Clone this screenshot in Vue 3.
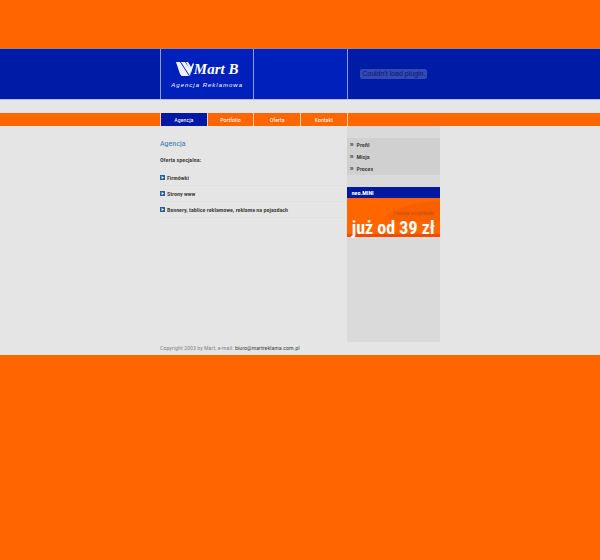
<script setup>
import { ref } from "vue";

const tabs = ["Agencja", "Portfolio", "Oferta", "Kontakt"];
const activeTab = ref("Agencja");

const offers = [
  "Firmówki",
  "Strony www",
  "Bannery, tablice reklamowe, reklama na pojazdach",
];

const sideLinks = ["Profil", "Misja", "Proces"];
</script>

<template>
  <div class="page">
    <header class="header">
      <div class="wrap header-grid">
        <div class="brand">
          <div class="brand-row">
            <svg class="mark" viewBox="0 0 18 16" aria-hidden="true">
              <path d="M0 1H4L13 15H6Q5 15 4 13Z" />
              <path d="M5 1H9L15 10L14 15Z" />
              <path d="M10 1H12L15 6L17 2L18 3L15 12Z" />
            </svg>
            <span class="brand-name">Mart B</span>
          </div>
          <span class="brand-sub">Agencja Reklamowa</span>
        </div>
        <div class="blank"></div>
        <div class="plugin">
          <span class="plugin-msg">Couldn't load plugin.</span>
        </div>
      </div>
    </header>

    <nav class="nav">
      <div class="wrap nav-grid">
        <a
          v-for="tab in tabs"
          :key="tab"
          href="#"
          class="tab"
          :class="{ active: tab === activeTab }"
          @click.prevent="activeTab = tab"
          >{{ tab }}</a
        >
        <span class="tab-end"></span>
      </div>
    </nav>

    <div class="body">
      <div class="wrap body-grid">
        <main class="content">
          <h1>Agencja</h1>
          <p class="lead">Oferta specjalna:</p>
          <ul class="offers">
            <li v-for="offer in offers" :key="offer">
              <svg class="bullet" viewBox="0 0 5 5" aria-hidden="true">
                <rect width="5" height="5" fill="#28609c" />
                <path d="M1.6 1L4 2.5L1.6 4Z" fill="#fff" />
              </svg>
              <a href="#">{{ offer }}</a>
            </li>
          </ul>
        </main>

        <aside class="side">
          <ul class="side-links">
            <li v-for="link in sideLinks" :key="link">
              <span class="arrow">»</span>
              <a href="#">{{ link }}</a>
            </li>
          </ul>
          <h2>neo.MINI</h2>
          <a href="#" class="promo">
            <svg class="swoosh" viewBox="0 0 93 39" preserveAspectRatio="none" aria-hidden="true">
              <path d="M38 18Q58 5 93 2V24H44Z" fill="#f66000" />
              <path d="M0 36H93V39H0Z" fill="#f04c00" />
            </svg>
            <span class="promo-small">i nowe wizytówki</span>
            <span class="promo-price">już od 39 zł</span>
          </a>
        </aside>
      </div>

      <footer class="wrap footer">
        Copyright 2003 by Mart, e-mail:
        <a href="mailto:biuro@martreklama.com.pl">biuro@martreklama.com.pl</a>
      </footer>
    </div>
  </div>
</template>

<style>
body {
  margin: 0;
  background: #ff6600;
}
</style>

<style scoped>
* {
  box-sizing: border-box;
}

.page {
  padding-top: 48px;
  font-family: "Roboto Condensed", "Arial Narrow", Roboto, "Liberation Sans", sans-serif;
  font-size: 6px;
  line-height: 12px;
  color: #484848;
}

.wrap {
  width: min(280px, 100%);
  margin: 0 auto;
}

a {
  color: inherit;
  text-decoration: none;
}

ul {
  margin: 0;
  padding: 0;
  list-style: none;
}

.header {
  background: #001ca6;
  border-top: 1px solid #9a8496;
  border-bottom: 1px solid #b4bce0;
}

.header-grid {
  display: grid;
  grid-template-columns: repeat(3, 1fr);
  height: 50px;
}

.brand,
.blank {
  background: #0020bc;
  border-left: 1px solid #8c9ce0;
}

.brand {
  display: flex;
  flex-direction: column;
  align-items: center;
  padding-top: 11px;
  color: #fff;
}

.brand-row {
  display: flex;
  align-items: center;
  height: 18px;
}

.mark {
  width: 18px;
  height: 16px;
  fill: #eef4ff;
}

.brand-name {
  font-family: "Liberation Serif", serif;
  font-size: 15px;
  font-style: italic;
  font-weight: 700;
}

.brand-sub {
  font-family: "Liberation Sans", Arial, sans-serif;
  font-size: 6px;
  font-style: italic;
  letter-spacing: 1px;
  line-height: 14px;
  white-space: nowrap;
}

.plugin {
  display: flex;
  align-items: center;
  justify-content: center;
  border-left: 1px solid #8c9ce0;
}

.plugin-msg {
  padding: 0 2px;
  border-radius: 2px;
  background: #3349b4;
  color: #07186f;
  font-family: "Liberation Sans", Arial, sans-serif;
  font-size: 7px;
  line-height: 10px;
  white-space: nowrap;
}

.nav {
  padding-top: 13px;
  background: linear-gradient(#e6e6e6 13px, #ff6600 13px);
}

.nav-grid {
  display: grid;
  grid-template-columns: repeat(6, 1fr);
}

.tab,
.tab-end {
  border-left: 1px solid #ffd0ac;
}

.tab {
  color: #fff;
  line-height: 13px;
  text-align: center;
}

.tab.active {
  background: #0019a4;
}

.body {
  background: #e5e5e5;
  border-bottom: 1px solid #ffe4c4;
}

.body-grid {
  display: grid;
  grid-template-columns: minmax(0, 2fr) minmax(0, 1fr);
  min-height: 216px;
}

.content {
  padding-top: 12px;
}

h1 {
  margin: 0;
  color: #3c78a4;
  font-size: 8px;
  font-weight: 400;
}

.lead {
  margin: 4px 0;
  font-weight: 700;
}

.offers li {
  display: flex;
  align-items: center;
  gap: 2px;
  min-height: 16px;
  border-bottom: 1px solid #e1e1e1;
  font-weight: 700;
}

.bullet {
  flex: none;
  width: 5px;
  height: 5px;
}

.side {
  padding-top: 12px;
  background: #dadada;
}

.side-links {
  margin-bottom: 12px;
  padding-top: 1px;
  background: #d0d0d0;
}

.side-links li {
  display: flex;
  gap: 3px;
  padding-left: 3px;
  font-weight: 700;
}

.arrow {
  font-family: "Liberation Sans", Arial, sans-serif;
  font-size: 7px;
}

h2 {
  margin: 0;
  padding-left: 5px;
  background: #0019a0;
  color: #fff;
  font-size: 6px;
  line-height: 11px;
}

.promo {
  position: relative;
  display: flex;
  flex-direction: column;
  height: 39px;
  padding-top: 10px;
  background: #ff6600;
}

.swoosh {
  position: absolute;
  inset: 0;
  width: 100%;
  height: 100%;
}

.promo-small {
  position: relative;
  padding-right: 6px;
  color: #c84c08;
  line-height: 10px;
  text-align: right;
}

.promo-price {
  position: relative;
  color: #fff;
  font-size: 18px;
  font-weight: 700;
  line-height: 20px;
  text-align: center;
  white-space: nowrap;
}

.footer {
  color: #888;
}

.footer a {
  color: #484848;
}
</style>
